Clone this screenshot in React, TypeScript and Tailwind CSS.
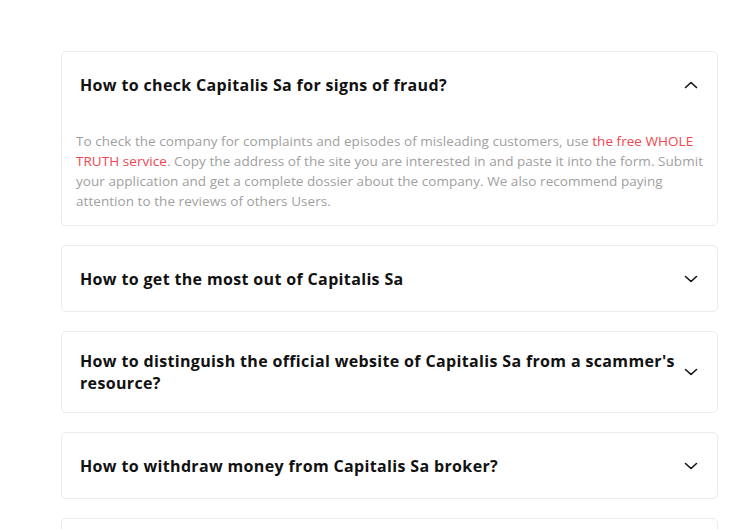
import { useState } from 'react'

type Item = { q: string; a?: React.ReactNode }

const items: Item[] = [
  {
    q: 'How to check Capitalis Sa for signs of fraud?',
    a: (
      <>
        To check the company for complaints and episodes of misleading customers, use{' '}
        <a href="#" className="text-[#f0464f]">
          the free WHOLE TRUTH service
        </a>
        . Copy the address of the site you are interested in and paste it into the form. Submit your
        application and get a complete dossier about the company. We also recommend paying attention
        to the reviews of others Users.
      </>
    ),
  },
  { q: 'How to get the most out of Capitalis Sa' },
  { q: "How to distinguish the official website of Capitalis Sa from a scammer's resource?" },
  { q: 'How to withdraw money from Capitalis Sa broker?' },
  { q: 'Is Capitalis Sa a reliable broker?' },
]

function Chevron({ open }: { open: boolean }) {
  return (
    <svg
      width="14"
      height="8"
      viewBox="0 0 14 8"
      fill="none"
      stroke="#111"
      strokeWidth={1.6}
      strokeLinecap="round"
      strokeLinejoin="round"
      className={open ? 'rotate-180' : ''}
    >
      <polyline points="1.5,1.5 7,6.5 12.5,1.5" />
    </svg>
  )
}

export default function App() {
  const [open, setOpen] = useState(0)

  return (
    <div className="min-h-screen bg-white pt-[51px] pl-[61px] pr-[22px] font-['Open_Sans',sans-serif]">
      <div className="flex flex-col gap-[19px]">
        {items.map((item, i) => {
          const isOpen = open === i
          return (
            <div key={i} className="rounded-[5px] border border-[#ebebeb] bg-white">
              <button
                onClick={() => setOpen(isOpen ? -1 : i)}
                className="flex min-h-[65px] w-full items-center justify-between gap-[8px] py-[18px] pl-[18px] pr-[19px] text-left"
              >
                <span className="text-[16px] leading-[22px] font-bold tracking-[0.35px] text-[#111]">
                  {item.q}
                </span>
                <span className="shrink-0">
                  <Chevron open={isOpen} />
                </span>
              </button>
              {isOpen && item.a && (
                <div className="px-[14px] pt-[14px] pb-[14px] text-[13.5px] leading-[20px] tracking-[0.05px] text-[#a0a0a0]">
                  {item.a}
                </div>
              )}
            </div>
          )
        })}
      </div>
    </div>
  )
}
